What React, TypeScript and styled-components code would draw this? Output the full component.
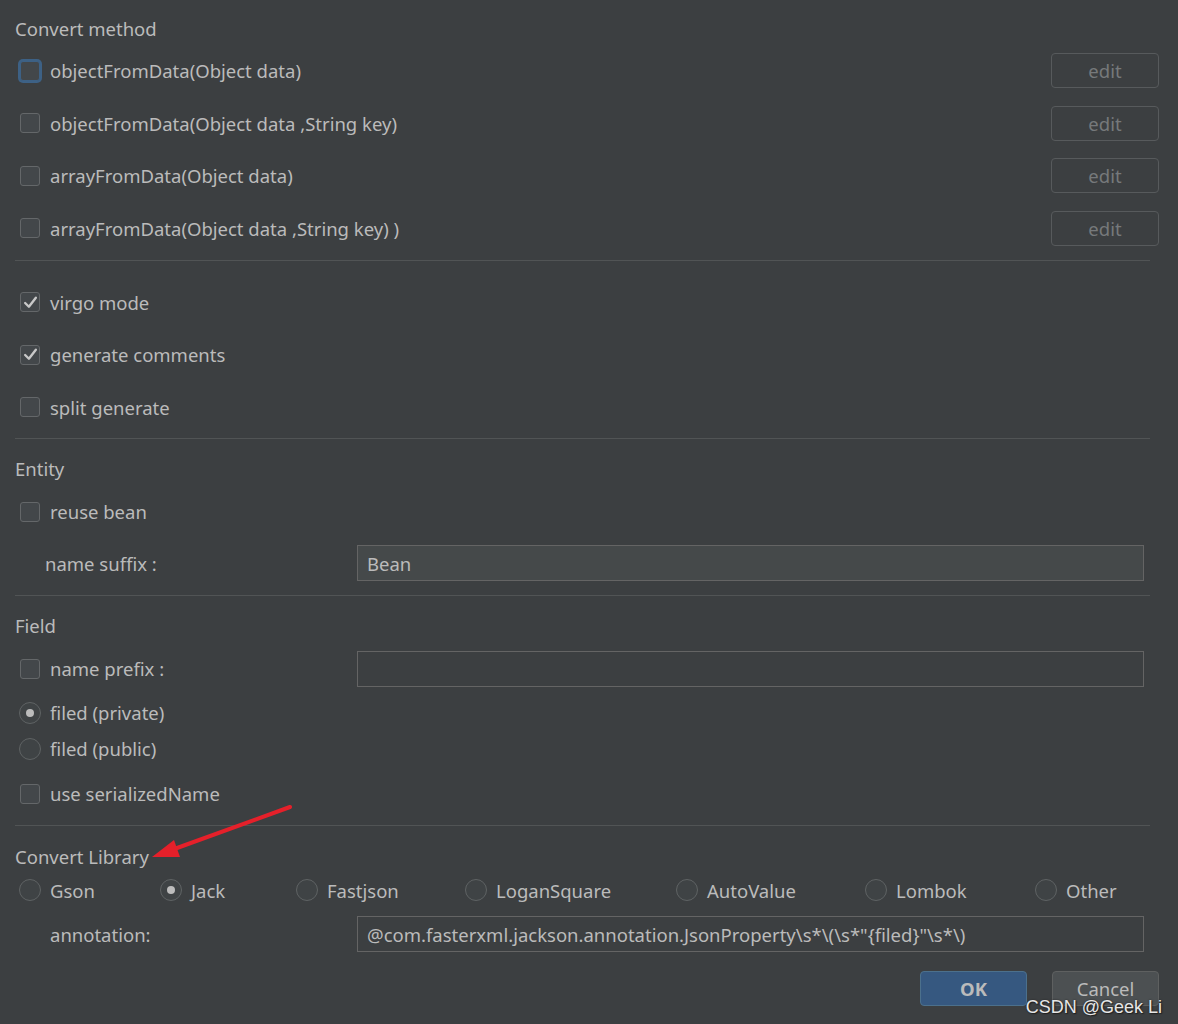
import React from "react";
import styled, { createGlobalStyle } from "styled-components";

const Global = createGlobalStyle`
  html, body { margin: 0; padding: 0; background: #3c3f41; }
  * { box-sizing: border-box; }
`;

const Page = styled.div`
  position: relative;
  width: 1178px;
  height: 1024px;
  background: #3c3f41;
  color: #bbbbbb;
  font-family: "Noto Sans", "Open Sans", sans-serif;
  font-size: 18.5px;
  padding: 10px 19px 0 15px;
  display: flex;
  flex-direction: column;
  overflow: hidden;
`;

const Section = styled.div<{ $pt?: number }>`
  display: flex;
  flex-direction: column;
  padding-top: ${(p) => p.$pt ?? 0}px;
`;

const Title = styled.div`
  height: 36px;
  display: flex;
  align-items: center;
  white-space: nowrap;
`;

const Separator = styled.div<{ $mt: number }>`
  height: 1px;
  background: #515455;
  margin: ${(p) => p.$mt}px 9px 0 0;
`;

const Row = styled.div<{ $h?: number; $mt?: number }>`
  height: ${(p) => p.$h ?? 35}px;
  margin-top: ${(p) => p.$mt ?? 0}px;
  display: flex;
  align-items: center;
  justify-content: space-between;
`;

const Check = styled.label<{ $radio?: boolean }>`
  display: flex;
  align-items: center;
  gap: ${(p) => (p.$radio ? 9 : 10)}px;
  padding-left: ${(p) => (p.$radio ? 4 : 5)}px;
  white-space: nowrap;
`;

const Box = styled.span<{ $focus?: boolean }>`
  width: 20px;
  height: 20px;
  border-radius: 3px;
  border: 1px solid ${(p) => (p.$focus ? "#3d6185" : "#646769")};
  background: #43474a;
  box-shadow: ${(p) => (p.$focus ? "0 0 0 2px #3d6185" : "none")};
  display: flex;
  align-items: center;
  justify-content: center;
`;

const Radio = styled.label`
  display: flex;
  align-items: center;
  gap: 9px;
  white-space: nowrap;
`;

const Circle = styled.span<{ $on?: boolean }>`
  width: 22px;
  height: 22px;
  border-radius: 50%;
  border: 1px solid #5f6364;
  background: #3f4345;
  display: flex;
  align-items: center;
  justify-content: center;
  &::after {
    content: "";
    display: ${(p) => (p.$on ? "block" : "none")};
    width: 8px;
    height: 8px;
    border-radius: 50%;
    background: #bcbcbc;
  }
`;

const EditButton = styled.button`
  width: 108px;
  height: 35px;
  border: 1px solid #575a5c;
  border-radius: 4px;
  background: transparent;
  color: #76797b;
  font-family: inherit;
  font-size: 18.5px;
  padding: 0;
`;

const FieldRow = styled.div<{ $mt: number; $labelPad: number }>`
  display: grid;
  grid-template-columns: 342px 1fr;
  align-items: center;
  margin: ${(p) => p.$mt}px 15px 0 0;
  height: 36px;
  & > :first-child {
    padding-left: ${(p) => p.$labelPad}px;
  }
`;

const FieldLabel = styled.span`
  white-space: nowrap;
`;

const Input = styled.div<{ $filled?: boolean; $w?: number }>`
  height: 36px;
  width: ${(p) => (p.$w ? `${p.$w}px` : "auto")};
  margin-right: ${(p) => (p.$w ? "15px" : "0")};
  border: 1px solid #646464;
  background: ${(p) => (p.$filled ? "#45494a" : "#3c3f41")};
  display: flex;
  align-items: center;
  padding-left: 9px;
  white-space: nowrap;
  overflow: hidden;
`;

const LibGrid = styled.div`
  display: grid;
  grid-template-columns: 141px 136px 169px 211px 189px 170px auto;
  padding-left: 4px;
  height: 30px;
  margin-top: 1px;
  align-items: center;
`;

const Footer = styled.div`
  display: flex;
  justify-content: flex-end;
  gap: 25px;
  margin-top: 18.5px;
`;

const DialogButton = styled.button<{ $primary?: boolean }>`
  width: 107px;
  height: 35px;
  border-radius: 4px;
  border: 1px solid ${(p) => (p.$primary ? "#4c708c" : "#5e6060")};
  background: ${(p) => (p.$primary ? "#365880" : "#4c5052")};
  color: #bbbbbb;
  font-family: inherit;
  font-size: 18.5px;
  font-weight: ${(p) => (p.$primary ? 700 : 400)};
  padding: 0;
`;

const Arrow = styled.svg`
  position: absolute;
  left: 140px;
  top: 795px;
  width: 170px;
  height: 75px;
  pointer-events: none;
`;

const Watermark = styled.div`
  position: absolute;
  right: 16px;
  bottom: 6px;
  font-family: "Liberation Sans", Arial, sans-serif;
  font-size: 18px;
  color: #e6e6e6;
  text-shadow: 0 0 2px #222, 1px 1px 1px #222;
  pointer-events: none;
`;

const CheckMark = () => (
  <svg width="15" height="15" viewBox="0 0 14 14">
    <path d="M2 7.5 L5.5 11 L12 2.5" fill="none" stroke="#c8c8c8" strokeWidth="2.2" strokeLinecap="round" strokeLinejoin="round" />
  </svg>
);

const CheckItem = ({ label, checked, focus }: { label: string; checked?: boolean; focus?: boolean }) => (
  <Check>
    <Box $focus={focus}>{checked && <CheckMark />}</Box>
    {label}
  </Check>
);

const RadioItem = ({ label, on }: { label: string; on?: boolean }) => (
  <Radio>
    <Circle $on={on} />
    {label}
  </Radio>
);

const methods = [
  "objectFromData(Object data)",
  "objectFromData(Object data ,String key)",
  "arrayFromData(Object data)",
  "arrayFromData(Object data ,String key) )",
];

const libs = ["Gson", "Jack", "Fastjson", "LoganSquare", "AutoValue", "Lombok", "Other"];

export default function App() {
  return (
    <>
      <Global />
      <Page>
        <Section>
          <Title>Convert method</Title>
          {methods.map((m, i) => (
            <Row key={m} $mt={i === 0 ? 7 : 17.5}>
              <CheckItem label={m} focus={i === 0} />
              <EditButton>edit</EditButton>
            </Row>
          ))}
        </Section>
        <Separator $mt={14} />
        <Section $pt={24}>
          <Row>
            <CheckItem label="virgo mode" checked />
          </Row>
          <Row $mt={17.5}>
            <CheckItem label="generate comments" checked />
          </Row>
          <Row $mt={17.5}>
            <CheckItem label="split generate" />
          </Row>
        </Section>
        <Separator $mt={13} />
        <Section $pt={12}>
          <Title>Entity</Title>
          <Row $mt={7.5}>
            <CheckItem label="reuse bean" />
          </Row>
          <FieldRow $mt={16} $labelPad={30}>
            <FieldLabel>name suffix :</FieldLabel>
            <Input $filled>Bean</Input>
          </FieldRow>
        </Section>
        <Separator $mt={14} />
        <Section $pt={11.5}>
          <Title>Field</Title>
          <Row $mt={7.5}>
            <CheckItem label="name prefix :" />
            <Input $w={787} />
          </Row>
          <Row $h={30} $mt={11.5}>
            <Check as="div" $radio>
              <Circle $on />
              filed (private)
            </Check>
          </Row>
          <Row $h={30} $mt={6}>
            <Check as="div" $radio>
              <Circle />
              filed (public)
            </Check>
          </Row>
          <Row $mt={12.5}>
            <CheckItem label="use serializedName" />
          </Row>
        </Section>
        <Separator $mt={13.5} />
        <Section $pt={12.5}>
          <Title>Convert Library</Title>
          <LibGrid>
            {libs.map((l) => (
              <RadioItem key={l} label={l} on={l === "Jack"} />
            ))}
          </LibGrid>
          <FieldRow $mt={11} $labelPad={35}>
            <FieldLabel>annotation:</FieldLabel>
            <Input>{'@com.fasterxml.jackson.annotation.JsonProperty\\s*\\(\\s*"{filed}"\\s*\\)'}</Input>
          </FieldRow>
          <Footer>
            <DialogButton $primary>OK</DialogButton>
            <DialogButton>Cancel</DialogButton>
          </Footer>
        </Section>
        <Arrow viewBox="0 0 170 75">
          <line x1="150" y1="12" x2="26" y2="57" stroke="#e5202a" strokeWidth="4" strokeLinecap="round" />
          <polygon points="12,62 34,45 40,62" fill="#e5202a" />
        </Arrow>
        <Watermark>CSDN @Geek Li</Watermark>
      </Page>
    </>
  );
}
